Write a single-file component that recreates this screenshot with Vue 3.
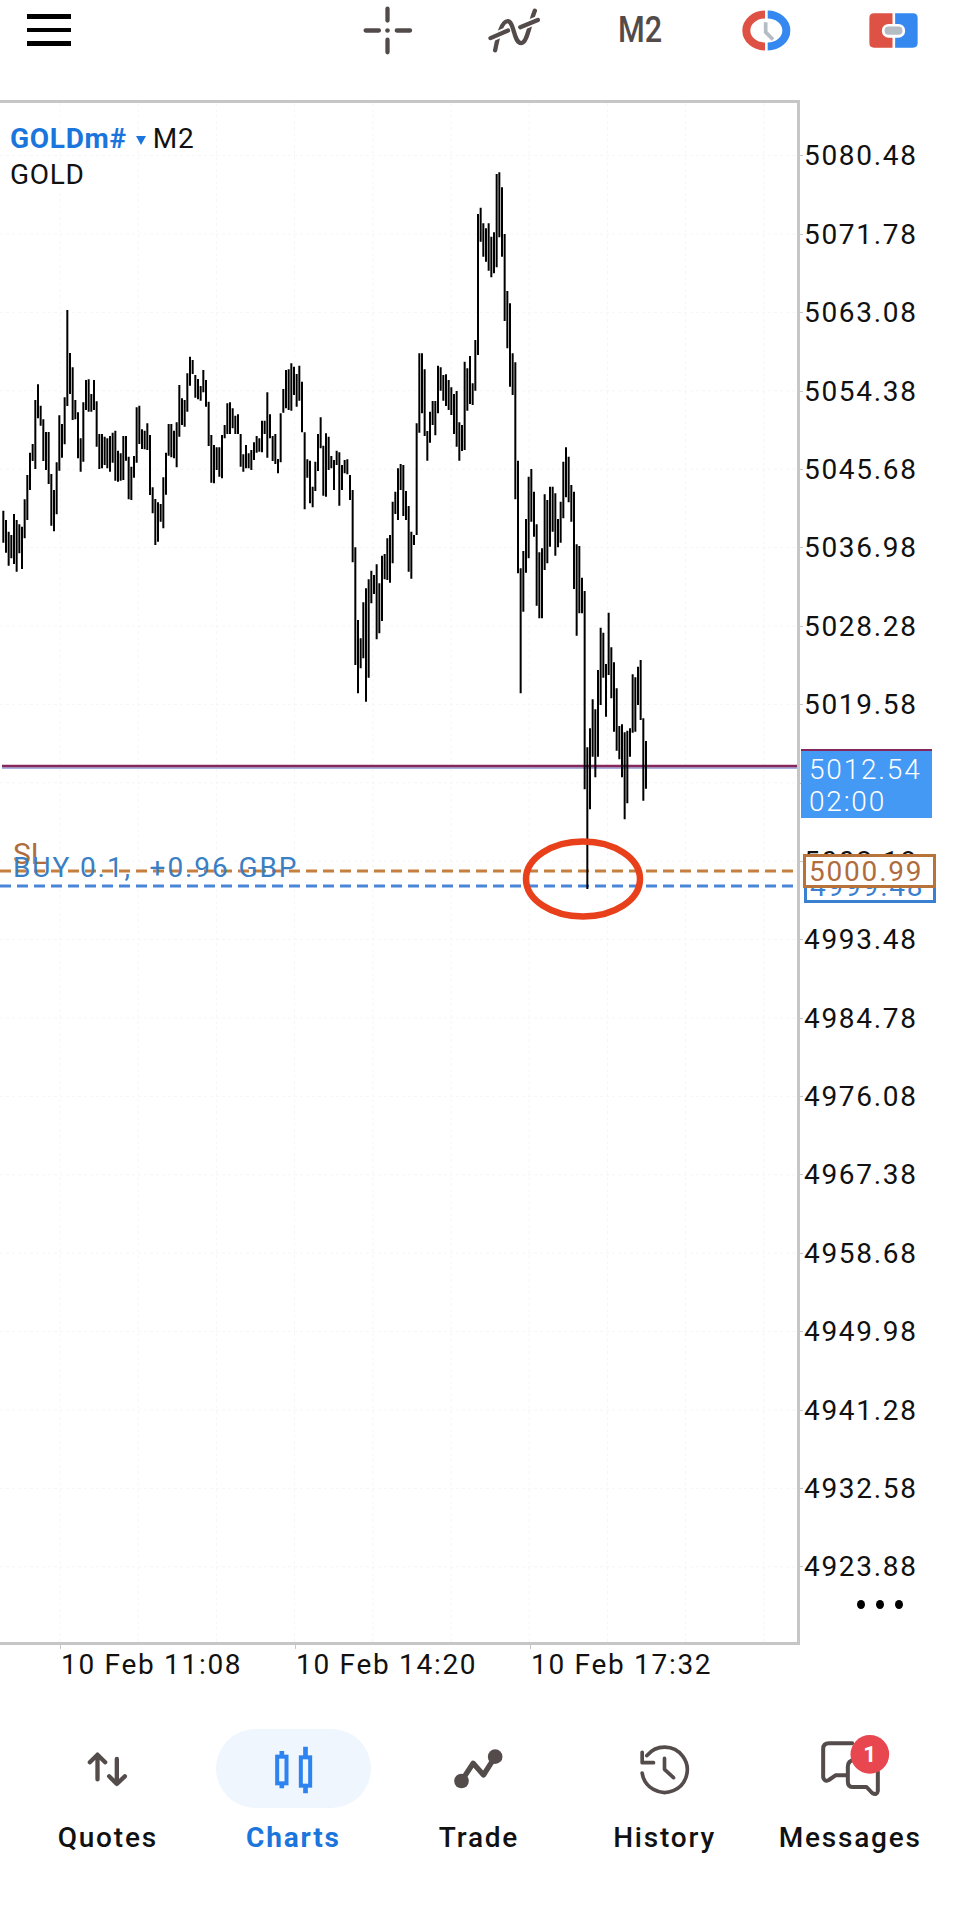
<script setup>
// bar ranges traced from the chart, in 1/3 px, relative to y = 360 and y = 440
const older = [
  [452,548],[480,578],[515,617],[525,595],[462,612],[480,635],[493,580],[500,627],[418,535],[345,480],
  [278,390],[252,303],[120,327],[73,175],[137,197],[178,303],[216,330],[216,372],[342,497],[390,514],
  [307,463],[166,332],[192,293],[112,253],[-150,138],[-21,102],[22,180],[120,178],[157,295],[235,335],
  [127,305],[60,150],[58,155],[102,155],[60,150],[124,260],[222,327],[222,325],[230,315],[235,325],
  [228,335],[218,308],[212,362],[272,365],[280,362],[228,360],[228,302],[290,418],[320,420],[288,353],
  [142,308],[137,252],[208,267],[212,268],[190,270],[225,405],[382,460],[417,555],[427,545],[432,485],
  [352,505],[278,404],[192,287],[192,292],[212,295],[187,322],[75,230],[115,195],[120,200],[40,155],
  [-10,77],[0,42],[45,113],[57,118],[78,122],[30,97],[60,140],[125,258],[225,368],[255,370],
  [262,330],[262,350],[225,355],[195,235],[130,222],[127,222],[145,205],[167,222],[163,222],[222,320],
  [283,335],[255,325],[280,325],[270,330],[247,300],[228,278],[235,275],[182,277],[182,222],[97,293],
  [163,235],[228,303],[222,312],[297,340],[160,307],[87,158],[30,145],[28,150],[10,152],[20,105],
  [42,140],[17,122],[65,217],[217,448],[298,353],[302,430],[380,442],[305,393],[222,333],[172,265],
  [257,407],[220,410],[230,330],
]
const newer = [
  [48,85],[60,150],[32,75],[37,197],[75,150],[60,100],[58,103],[105,180],[150,367],[322,675],
  [540,760],[595,685],[487,655],[445,785],[418,713],[392,490],[405,462],[373,598],[430,580],[347,543],
  [342,418],[295,420],[285,428],[185,370],[155,222],[85,240],[72,150],[75,228],[153,240],[198,395],
  [275,416],[285,315],[-50,285],[-260,-22],[-260,-80],[-212,-12],[-27,62],[-85,8],[-117,-45],[-117,-14],
  [-223,-80],[-218,-148],[-195,-118],[-197,-102],[-180,-90],[-158,-75],[-138,-18],[-147,20],[-53,62],[-45,33],
  [-235,30],[-215,-88],[-252,-108],[-170,-105],[-300,-148],[-678,-255],[-697,-595],[-650,-550],[-635,-535],[-650,-508],
  [-610,-488],[-623,-500],[-798,-518],[-803,-608],[-758,-550],[-618,-357],[-447,-275],[-410,-160],[-260,-135],[-233,178],
  [62,400],[385,760],[333,515],[237,398],[110,355],[87,245],[155,290],[253,497],[337,535],[325,535],
  [163,390],[180,370],[140,320],[140,275],[160,347],[237,322],[185,308],[65,235],[22,172],[50,187],
  [135,245],[155,447],[313,587],[318,520],[413,520],[453,1048],[922,1347],[865,1108],[778,950],[808,1012],
  [690,950],[563,795],[578,713],[672,830],[518,705],[622,775],[667,875],[745,932],[858,958],[853,1012],
  [877,1138],[872,1090],[865,950],[703,878],[712,875],[680,795],[660,840],[835,1082],[903,1046],
]
const ranges = [
  ...older.map(([a, b]) => [360 + a / 3, 360 + b / 3]),
  ...newer.map(([a, b]) => [440 + a / 3, 440 + b / 3]),
]
const barsPath = ranges
  .map(([top, bottom], i) => `M${(3.33 + (i * 8) / 3).toFixed(2)} ${top.toFixed(1)}V${bottom.toFixed(1)}`)
  .join('')

const gridX = Array.from({ length: 10 }, (_, i) => 60 + i * 78.2)
const gridY = Array.from({ length: 19 }, (_, i) => 155.6 + i * 78.4)

const prices = [
  '5080.48', '5071.78', '5063.08', '5054.38', '5045.68', '5036.98', '5028.28', '5019.58', '5010.88', '5002.18',
  '4993.48', '4984.78', '4976.08', '4967.38', '4958.68', '4949.98', '4941.28', '4932.58', '4923.88',
]
const times = ['10 Feb 11:08', '10 Feb 14:20', '10 Feb 17:32']
</script>

<template>
  <div class="screen">
    <header class="toolbar">
      <div class="menu"><span></span><span></span><span></span></div>
      <div class="tools">
        <div class="tool">
          <svg width="53" height="53" viewBox="30 10 160 160" fill="none" stroke="#534b4a" stroke-width="13" stroke-linecap="round">
            <path d="M110 24V60M110 118V156M44 90H84M138 90H178" />
            <circle cx="110" cy="90" r="7" fill="#534b4a" stroke="none" />
          </svg>
        </div>
        <div class="tool">
          <svg width="60" height="53" viewBox="398 10 180 160" fill="none" stroke="#534b4a" stroke-width="13" stroke-linecap="round">
            <path d="M431 150C440 104 452 60 470 62C490 66 486 128 510 128C528 128 534 72 551 30" />
            <path d="M417 113L470 90M507 80L560 58" stroke="#fff" stroke-width="24" stroke-linecap="butt" />
            <path d="M417 113L470 90M507 80L560 58" />
          </svg>
        </div>
        <div class="tool"><span class="period">M2</span></div>
        <div class="tool">
          <svg width="55" height="47" viewBox="30 20 165 140" fill="none" stroke-width="24">
            <path d="M108 42A56 48 0 0 0 108 138" stroke="#dd5244" />
            <path d="M116 42A56 48 0 0 1 116 138" stroke="#3588ef" />
            <path d="M110 65V95L132 117" stroke="#b4bcc4" stroke-width="11" />
          </svg>
        </div>
        <div class="tool">
          <svg width="55" height="41" viewBox="410 28 166 124">
            <path d="M434 38H490V142H434Q420 142 420 128V52Q420 38 434 38Z" fill="#dd5244" />
            <path d="M498 38H552Q566 38 566 52V128Q566 142 552 142H498Z" fill="#3588ef" />
            <rect x="458" y="70" width="70" height="42" rx="20" fill="#fff" />
            <rect x="466" y="78" width="54" height="25" rx="12" fill="#b4bcc4" />
          </svg>
        </div>
      </div>
    </header>

    <section class="chart-row">
      <div class="plot">
        <svg class="canvas" width="797" height="1539" viewBox="0 103 797 1539" fill="none">
          <path v-for="x in gridX" :key="x" :d="`M${x} 103V1642`" stroke="#f6f6f6" stroke-dasharray="3 3" />
          <path v-for="y in gridY" :key="y" :d="`M0 ${y}H797`" stroke="#f6f6f6" stroke-dasharray="3 3" />
          <path d="M2 768H797" stroke="#a8b0dc" stroke-width="2" />
          <path d="M2 766H797" stroke="#86295a" stroke-width="2.5" />
          <path d="M0 871H797" stroke="#c57f3f" stroke-width="3" stroke-dasharray="11 6" />
          <path d="M0 886H797" stroke="#4a86d8" stroke-width="3" stroke-dasharray="11 6" />
          <path :d="barsPath" stroke="#000" stroke-width="2" />
          <ellipse cx="583" cy="879" rx="57" ry="37.5" stroke="#e9401c" stroke-width="6.5" />
        </svg>
        <div class="symbol">
          <div class="symbol-line">
            <span class="symbol-name">GOLDm#</span>
            <span class="caret"></span>
            <span>M2</span>
          </div>
          <div class="symbol-desc">GOLD</div>
        </div>
        <span class="trade-sl">SL</span>
        <span class="trade-buy">BUY 0.1,&nbsp; +0.96 GBP</span>
      </div>

      <aside class="axis">
        <div v-for="p in prices" :key="p" class="price">{{ p }}</div>
        <div class="tag tag-buy">4999.48</div>
        <div class="tag tag-sl">5000.99</div>
        <div class="tag-now">
          <div>5012.54</div>
          <div>02:00</div>
        </div>
        <div class="more"><span></span><span></span><span></span></div>
      </aside>
    </section>

    <div class="time-row">
      <span v-for="t in times" :key="t" class="time">{{ t }}</span>
    </div>

    <nav class="nav">
      <div class="nav-item">
        <svg class="nav-icon" viewBox="-117.5 12 465 237" fill="none" stroke="#544c4a" stroke-width="13" stroke-linecap="round" stroke-linejoin="round">
          <path d="M85 90V163M62 112L85 89L108 112" />
          <path d="M143 102V176M120 154L143 177L167 154" />
        </svg>
        <span>Quotes</span>
      </div>
      <div class="nav-item active">
        <svg class="nav-icon" viewBox="437.5 12 465 237" fill="none" stroke="#2d84f0" stroke-width="12">
          <rect x="621" y="95" width="28" height="80" />
          <rect x="692" y="97" width="28" height="85" />
          <path d="M635 78V95M635 175V190M706 65V97M706 182V205" stroke-width="14" />
        </svg>
        <span>Charts</span>
      </div>
      <div class="nav-item">
        <svg class="nav-icon" viewBox="995.5 12 465 237" fill="none" stroke="#544c4a" stroke-width="16" stroke-linejoin="round">
          <path d="M1177 168L1212 115L1243 150L1278 95" />
          <circle cx="1177" cy="168" r="22" fill="#544c4a" stroke="none" />
          <circle cx="1278" cy="95" r="22" fill="#544c4a" stroke="none" />
        </svg>
        <span>Trade</span>
      </div>
      <div class="nav-item">
        <svg class="nav-icon" viewBox="-99.5 12 465 237" fill="none" stroke="#544c4a" stroke-width="11" stroke-linecap="round" stroke-linejoin="round">
          <path d="M80 92A68 68 0 1 1 66 144" />
          <path d="M66 82V113H100" />
          <path d="M133 100V133L160 158" />
        </svg>
        <span>History</span>
      </div>
      <div class="nav-item">
        <svg class="nav-icon" viewBox="457.5 12 465 237" fill="none" stroke="#544c4a" stroke-width="12" stroke-linecap="round" stroke-linejoin="round">
          <path d="M695 55H625Q608 55 608 72V155Q610 172 625 165L645 151H680" />
          <path d="M702 104Q682 106 682 125V170Q682 186 698 186H738L755 204Q770 212 772 198V140" />
          <circle cx="748" cy="88" r="58" fill="#e8474f" stroke="none" />
          <text x="748" y="112" text-anchor="middle" class="badge" fill="#fff" stroke="none">1</text>
        </svg>
        <span>Messages</span>
      </div>
    </nav>
  </div>
</template>

<style scoped>
.screen {
  width: 958px;
  height: 1920px;
  background: #fff;
  font-family: Roboto, "Liberation Sans", sans-serif;
  color: #111;
  overflow: hidden;
}

.toolbar {
  display: flex;
  justify-content: space-between;
  align-items: center;
  height: 60px;
  margin-bottom: 40px;
  padding: 0 1.5px 0 27px;
}
.menu {
  display: flex;
  flex-direction: column;
  gap: 9px;
}
.menu span {
  display: block;
  width: 44px;
  height: 4.5px;
  background: #000;
}
.tools {
  display: flex;
}
.tool {
  display: flex;
  justify-content: center;
  align-items: center;
  width: 126.5px;
}
.period {
  display: block;
  font-size: 36px;
  font-weight: 500;
  line-height: 40px;
  color: #534b4a;
  transform: scaleX(0.85);
}

.chart-row {
  display: flex;
}
.plot {
  position: relative;
  box-sizing: border-box;
  width: 800px;
  height: 1545px;
  border-top: 3px solid #c6c6c6;
  border-right: 3px solid #c6c6c6;
  border-bottom: 3px solid #c6c6c6;
}
.canvas {
  display: block;
}
.symbol {
  position: absolute;
  left: 10px;
  top: 18px;
  font-size: 28px;
  line-height: 36px;
  letter-spacing: 0.7px;
}
.symbol-line {
  display: flex;
  align-items: center;
}
.symbol-name {
  font-weight: 700;
  color: #1a75dc;
}
.caret {
  width: 0;
  height: 0;
  margin: 2px 7px 0 9px;
  border-left: 5px solid transparent;
  border-right: 5px solid transparent;
  border-top: 9px solid #1a75dc;
}
.trade-sl,
.trade-buy {
  position: absolute;
  left: 13px;
  line-height: 32px;
}
.trade-sl {
  top: 735px;
  font-size: 30px;
  color: #b06c3c;
}
.trade-buy {
  top: 749px;
  font-size: 28px;
  letter-spacing: 1.9px;
  color: #3a7fc4;
  white-space: nowrap;
}

.axis {
  position: relative;
  flex: 1;
  padding-top: 17.4px;
}
.price {
  position: relative;
  height: 78.4px;
  padding-left: 4px;
  font-size: 28px;
  line-height: 78.4px;
  letter-spacing: 1.7px;
}
.price::before {
  content: "";
  position: absolute;
  left: 0;
  top: 38px;
  width: 3px;
  height: 1px;
  background: #c6c6c6;
}
.tag,
.tag-now {
  position: absolute;
  box-sizing: border-box;
  font-size: 28px;
  letter-spacing: 1.8px;
}
.tag {
  display: flex;
  align-items: center;
  padding-left: 3px;
  background: #fff;
}
.tag-buy {
  left: 4px;
  top: 770px;
  width: 132px;
  height: 33px;
  border: 3px solid #3a80d0;
  color: #3a80d0;
}
.tag-sl {
  left: 3px;
  top: 754px;
  width: 133px;
  height: 34px;
  border: 3px solid #b8733a;
  color: #b06c3c;
}
.tag-now {
  left: 1px;
  top: 649px;
  width: 131px;
  height: 69px;
  padding: 3px 0 0 8px;
  border-top: 2px solid #86295a;
  background: #4499f5;
  color: #fff;
  font-weight: 300;
  line-height: 32px;
}
.more {
  position: absolute;
  left: 57px;
  top: 1500px;
  display: flex;
  gap: 11px;
}
.more span {
  width: 8px;
  height: 9px;
  border-radius: 50%;
  background: #000;
}

.time-row {
  display: flex;
  margin-bottom: 44px;
  padding-left: 60px;
}
.time {
  position: relative;
  width: 234px;
  padding-left: 1px;
  font-size: 28px;
  line-height: 40px;
  letter-spacing: 1.7px;
}
.time::before {
  content: "";
  position: absolute;
  left: 0;
  top: 0;
  width: 1px;
  height: 4px;
  background: #c6c6c6;
}

.nav {
  display: grid;
  grid-template-columns: repeat(5, 1fr);
  padding: 0 15px;
}
.nav-item {
  display: flex;
  flex-direction: column;
  align-items: center;
  gap: 10px;
  font-size: 28px;
  font-weight: 500;
  line-height: 40px;
  letter-spacing: 1.8px;
}
.nav-icon {
  display: block;
  width: 155px;
  height: 79px;
  border-radius: 40px;
  overflow: visible;
}
.active {
  color: #1a75dc;
  font-weight: 700;
}
.active .nav-icon {
  background: #f0f6fd;
}
.badge {
  font-family: Roboto, sans-serif;
  font-size: 68px;
  font-weight: 700;
  letter-spacing: 0;
}
</style>

<style>
html,
body {
  margin: 0;
  background: #fff;
}
</style>
